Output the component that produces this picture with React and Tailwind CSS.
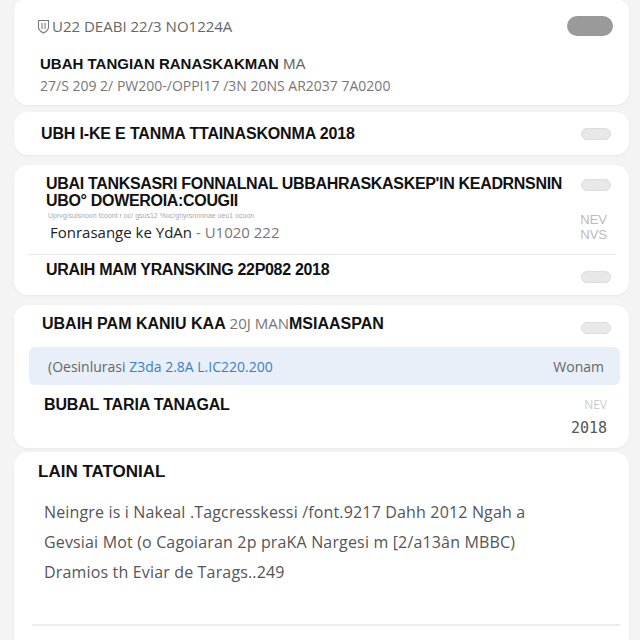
export default function App() {
  const pill = 'h-[12px] w-[30px] rounded-full border border-[#dcdcdc] bg-[#e8e8e8]'
  const soft = "font-['Open_Sans',sans-serif]"

  return (
    <div className="min-h-screen bg-[#f4f4f5] pl-[14px] pr-[11px] pt-px font-['Liberation_Sans',Arial,sans-serif] text-[#111]">
      {/* Record header */}
      <div className="-mt-px h-[105px] rounded-b-[14px] rounded-t-[10px] bg-white pl-[25px] pr-[16px] pt-[16px] shadow-[0_1px_3px_rgba(0,0,0,0.05)]">
        <div className="flex items-center justify-between">
          <div className={`${soft} flex items-center gap-[2px] text-[15px] leading-[20px] text-[#666]`}>
            <svg className="-ml-[2px]" width="13" height="15" viewBox="0 0 13 15" fill="none" stroke="#777" strokeWidth="1.1">
              <path d="M1.5 1.5h10v6.5c0 3-2.5 4.8-5 6-2.5-1.2-5-3-5-6z" />
              <path d="M5 4v6M8 4v6" />
            </svg>
            <span>U22 DEABI 22/3 NO1224A</span>
          </div>
          <div className="h-[20px] w-[46px] rounded-full bg-[#9a9a9a]" />
        </div>
        <p className="ml-px mt-[19px] text-[15px] leading-[18px]">
          <span className="font-bold">UBAH TANGIAN RANASKAKMAN</span>
          <span className="text-[#666]"> MA</span>
        </p>
        <p className={`${soft} ml-px mt-[4px] text-[14px] leading-[18px] text-[#777]`}>
          27/S 209 2/ PW200-/OPPI17 /3N 20NS AR2037 7A0200
        </p>
      </div>

      {/* Single row */}
      <div className="mt-[7px] flex h-[43px] items-center justify-between rounded-[14px] bg-white pl-[27px] pr-[18px] shadow-[0_1px_3px_rgba(0,0,0,0.05)]">
        <span className="text-[16px] font-bold tracking-[-0.01em]">UBH I-KE E TANMA TTAINASKONMA 2018</span>
        <div className={pill} />
      </div>

      {/* Grouped rows */}
      <div className="mt-[10px] h-[130px] rounded-[14px] bg-white pl-[18px] pr-[18px] pt-[10px] shadow-[0_1px_3px_rgba(0,0,0,0.05)]">
        <div className="flex justify-between">
          <p className="pl-[14px] text-[16px] font-bold leading-[17px] tracking-[-0.02em]">
            UBAI TANKSASRI FONNALNAL UBBAHRASKASKEP'IN KEADRNSNIN
            <br />
            UBO° DOWEROIA:COUGII
          </p>
          <div className={`${pill} mt-[4px] shrink-0`} />
        </div>
        <div className="flex justify-between pr-[4px]">
          <div className="pl-[16px]">
            <p className="mt-[2px] text-[7px] leading-[9px] text-[#aaa]">
              Uprvg/sulsnoon fcoont r oc/ gsus12 %oc/ghyrsnnnnae oeu1 ocoon
            </p>
            <p className={`${soft} mt-[2px] pl-[2px] text-[15px] leading-[20px] text-[#222]`}>
              Fonrasange ke YdAn <span className="text-[#777]">- U1020 222</span>
            </p>
          </div>
          <div className="mt-[3px] text-right text-[13px] leading-[15px] text-[#bbb]">
            <p>NEV</p>
            <p>NVS</p>
          </div>
        </div>
        <div className="-ml-[4px] mt-[12px] h-px w-[588px] bg-[#e6e6e6]" />
        <div className="flex items-start justify-between pt-[6px]">
          <span className="pl-[14px] text-[16px] font-bold leading-[18px] tracking-[-0.02em]">URAIH MAM YRANSKING 22P082 2018</span>
          <div className={`${pill} mt-[10px]`} />
        </div>
      </div>

      {/* Detail card */}
      <div className="mt-[10px] h-[143px] rounded-[14px] bg-white pl-[15px] pr-[9px] pt-[9px] shadow-[0_1px_3px_rgba(0,0,0,0.05)]">
        <div className="flex items-start justify-between pr-[9px]">
          <p className="pl-[13px] text-[16px] leading-[18px]">
            <span className="font-bold">UBAIH PAM KANIU KAA</span>
            <span className={`${soft} text-[15px] text-[#777]`}> 20J MAN</span>
            <span className="font-bold">MSIAASPAN</span>
          </p>
          <div className={`${pill} mt-[8px]`} />
        </div>
        <div className={`${soft} mt-[13px] flex h-[38px] items-center justify-between rounded-[6px] bg-[#e8eff8] pl-[19px] pr-[16px] text-[14px]`}>
          <span className="text-[#666]">
            (Oesinlurasi <span className="text-[#3d7fbf]">Z3da 2.8A L.IC220.200</span>
          </span>
          <span className="text-[#666]">Wonam</span>
        </div>
        <div className="flex justify-between pl-[15px] pr-[13px] pt-[11px]">
          <span className="text-[16px] font-bold leading-[18px] tracking-[-0.01em]">BUBAL TARIA TANAGAL</span>
          <div className="text-right">
            <p className={`${soft} text-[12px] leading-[18px] text-[#ccc]`}>NEV</p>
            <p className="mt-[5px] font-['DejaVu_Sans_Mono',monospace] text-[15px] leading-[18px] text-[#555]">2018</p>
          </div>
        </div>
      </div>

      {/* Notes */}
      <div className="mt-[4px] h-[200px] rounded-t-[14px] bg-white pl-[24px] pr-[10px] pt-[10px] shadow-[0_1px_3px_rgba(0,0,0,0.05)]">
        <p className="text-[17px] font-bold leading-[20px]">LAIN TATONIAL</p>
        <div className={`${soft} mt-[15px] pl-[6px] text-[16px] leading-[30px] tracking-[0.01em] text-[#555]`}>
          <p>Neingre is i Nakeal .Tagcresskessi /font.9217 Dahh 2012 Ngah a</p>
          <p>Gevsiai Mot (o Cagoiaran 2p praKA Nargesi m [2/a13ân MBBC)</p>
          <p>Dramios th Eviar de Tarags..249</p>
        </div>
        <div className="-ml-[6px] mt-[37px] h-[2px] w-[588px] bg-[#ececec]" />
      </div>
    </div>
  )
}
